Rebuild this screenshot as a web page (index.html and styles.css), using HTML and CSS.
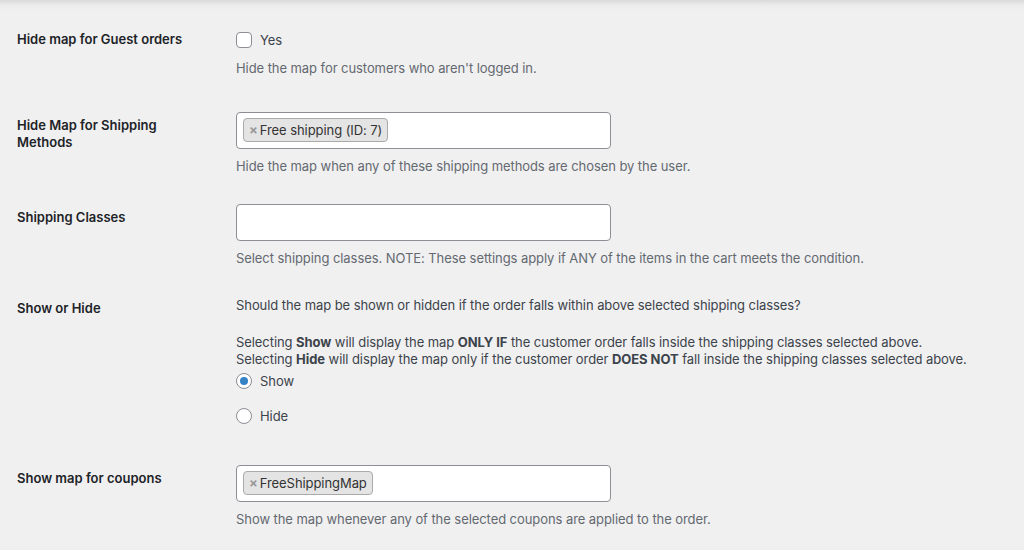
FILE: index.html
```html
<!DOCTYPE html>
<html lang="en">
<head>
  <meta charset="UTF-8" />
  <title>Map Settings</title>
  <link rel="stylesheet" href="styles.css">
</head>
<body>

  <div class="settings">

    <div class="row guest">
      <div class="label">Hide map for Guest orders</div>
      <div class="field">
        <label class="choice"><span class="checkbox"></span>Yes</label>
        <p class="description">Hide the map for customers who aren't logged in.</p>
      </div>
    </div>

    <div class="row">
      <div class="label">Hide Map for Shipping<br>Methods</div>
      <div class="field">
        <div class="select-box">
          <span class="tag"><span class="tag-x">×</span>Free shipping (ID: 7)</span>
        </div>
        <p class="description">Hide the map when any of these shipping methods are chosen by the user.</p>
      </div>
    </div>

    <div class="row">
      <div class="label">Shipping Classes</div>
      <div class="field">
        <div class="select-box"></div>
        <p class="description">Select shipping classes. NOTE: These settings apply if ANY of the items in the cart meets the condition.</p>
      </div>
    </div>

    <div class="row show-hide">
      <div class="label">Show or Hide</div>
      <div class="field">
        <p class="text">Should the map be shown or hidden if the order falls within above selected shipping classes?</p>
        <p class="text spaced">Selecting <b>Show</b> will display the map <b>ONLY IF</b> the customer order falls inside the shipping classes selected above.<br>
        Selecting <b>Hide</b> will display the map only if the customer order <b>DOES NOT</b> fall inside the shipping classes selected above.</p>
        <ul class="radios">
          <li><label class="choice"><span class="radio checked"></span>Show</label></li>
          <li><label class="choice"><span class="radio"></span>Hide</label></li>
        </ul>
      </div>
    </div>

    <div class="row">
      <div class="label">Show map for coupons</div>
      <div class="field">
        <div class="select-box">
          <span class="tag"><span class="tag-x">×</span>FreeShippingMap</span>
        </div>
        <p class="description">Show the map whenever any of the selected coupons are applied to the order.</p>
      </div>
    </div>

  </div>

</body>
</html>
```

FILE: styles.css
```css
html {
  background: #f0f0f1;
}
body {
  margin: 0;
  height: 550px;
  overflow: hidden;
  background: linear-gradient(to bottom, #d9d9db 0, #ebebec 5px, #f0f0f1 10px);
  font-family: Inter, "Noto Sans", sans-serif;
  font-size: 13px;
  color: #3c434a;
}
.settings {
  padding: 15px 0 0 17px;
}
.row {
  display: grid;
  grid-template-columns: 219px 375px;
}
.label {
  padding: 20px 0;
  font-weight: 600;
  color: #1d2327;
  line-height: 17px;
}
.field {
  padding: 15px 0 14px;
  letter-spacing: -0.07px;
}
.guest .label {
  padding-top: 16px;
}
.guest .field {
  padding: 14px 0 20px;
}
.show-hide .label {
  padding-top: 19px;
}
.show-hide .field {
  padding: 16px 0 0;
}
.choice {
  display: flex;
  align-items: center;
  gap: 8px;
  height: 22px;
  white-space: nowrap;
}
.checkbox, .radio {
  width: 14px;
  height: 14px;
  background: white;
  border: 1px solid #8c8f94;
  flex-shrink: 0;
}
.checkbox {
  border-radius: 4px;
}
.radio {
  border-radius: 50%;
  position: relative;
}
.radio.checked::after {
  content: "";
  position: absolute;
  left: 3px;
  top: 3px;
  width: 8px;
  height: 8px;
  border-radius: 50%;
  background: #3582c4;
}
p {
  margin: 0;
}
.description {
  margin-top: 9px;
  line-height: 17px;
  color: #646970;
  white-space: nowrap;
}
.text {
  line-height: 17px;
  white-space: nowrap;
}
.text.spaced {
  margin-top: 20px;
}
.select-box {
  box-sizing: border-box;
  width: 375px;
  height: 37px;
  background: white;
  border: 1px solid #8c8f94;
  border-radius: 4px;
  padding: 5px 6px;
}
.tag {
  display: inline-flex;
  align-items: center;
  height: 24px;
  box-sizing: border-box;
  padding: 0 5px;
  background: #e4e4e4;
  border: 1px solid #aaa;
  border-radius: 4px;
  color: #333;
}
.tag-x {
  color: #999;
  font-weight: 700;
  margin-right: 2px;
}
.radios {
  list-style: none;
  margin: 2px 0 0 0;
  padding: 0;
}
.radios li {
  margin-bottom: 13px;
}
.radios li:last-child {
  margin-bottom: 23px;
}
```
